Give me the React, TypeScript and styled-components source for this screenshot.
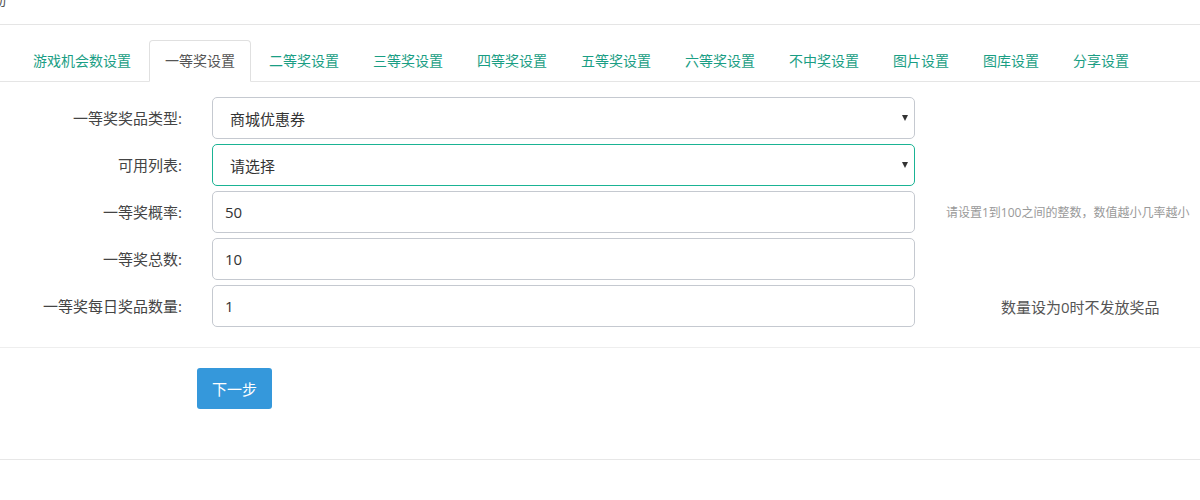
import React from 'react';
import styled, { createGlobalStyle } from 'styled-components';

const GlobalStyle = createGlobalStyle`
  html, body {
    margin: 0;
    padding: 0;
    background: #ffffff;
    font-family: 'Open Sans', 'Noto Sans CJK SC', sans-serif;
    font-size: 14px;
    color: #333;
    overflow: hidden;
  }
  * {
    box-sizing: border-box;
  }
`;

const Page = styled.div`
  width: 1200px;
  height: 500px;
  background: #ffffff;
`;

const Header = styled.div`
  height: 25px;
  border-bottom: 1px solid #e5e5e5;
  overflow: hidden;
`;

const HeaderTitle = styled.div`
  margin: -10px 0 0 -8px;
  font-size: 14px;
  color: #555;
  line-height: 20px;
`;

const TabBar = styled.ul`
  list-style: none;
  margin: 15px 0 0 0;
  padding: 0 0 0 17px;
  display: flex;
  border-bottom: 1px solid #e5e5e5;
`;

const Tab = styled.li<{ active?: boolean }>`
  margin-right: 2px;
  margin-bottom: -1px;
  padding: 10px 15px;
  line-height: 20px;
  font-size: 14px;
  border: 1px solid ${p => (p.active ? '#e0e0e0' : 'transparent')};
  border-bottom-color: ${p => (p.active ? '#ffffff' : 'transparent')};
  border-radius: 4px 4px 0 0;
  background: ${p => (p.active ? '#ffffff' : 'transparent')};
  color: ${p => (p.active ? '#555' : '#1a9e84')};
  white-space: nowrap;
  cursor: pointer;
`;

const Form = styled.div`
  padding: 15px 0 20px 0;
  display: flex;
  flex-direction: column;
  gap: 5px;
  border-bottom: 1px solid #eeeeee;
`;

const FormRow = styled.div`
  display: flex;
  align-items: center;
  height: 42px;
`;

const Label = styled.label`
  width: 197px;
  padding-right: 15px;
  text-align: right;
  font-size: 15px;
  color: #444;
  margin-top: -2px;
`;

const Field = styled.div<{ focused?: boolean }>`
  margin-left: 15px;
  width: 703px;
  height: 42px;
  border: 1px solid ${p => (p.focused ? '#1ab394' : '#c5c9d0')};
  border-radius: 5px;
  display: flex;
  align-items: center;
  justify-content: space-between;
  background: #fff;
`;

const FieldText = styled.span<{ select?: boolean }>`
  padding-left: ${p => (p.select ? '17px' : '12px')};
  font-size: 15px;
  color: #333;
`;

const Caret = styled.span`
  width: 0;
  height: 0;
  margin-right: 6px;
  border-left: 3px solid transparent;
  border-right: 3px solid transparent;
  border-top: 6px solid #333;
`;

const HelpSmall = styled.span`
  margin-left: 31px;
  font-size: 12px;
  color: #999;
  white-space: nowrap;
`;

const HelpNormal = styled.span`
  margin-left: 86px;
  font-size: 15px;
  color: #555;
  white-space: nowrap;
`;

const Actions = styled.div`
  height: 112px;
  padding: 20px 0 0 197px;
  border-bottom: 1px solid #e7e7e7;
`;

const Button = styled.button`
  width: 75px;
  height: 41px;
  border: none;
  border-radius: 3px;
  background: #3598db;
  color: #fff;
  font-family: 'Open Sans', 'Noto Sans CJK SC', sans-serif;
  font-size: 15px;
  cursor: pointer;
`;

const tabs = [
  '游戏机会数设置',
  '一等奖设置',
  '二等奖设置',
  '三等奖设置',
  '四等奖设置',
  '五等奖设置',
  '六等奖设置',
  '不中奖设置',
  '图片设置',
  '图库设置',
  '分享设置',
];

export default function App() {
  return (
    <Page>
      <GlobalStyle />
      <Header>
        <HeaderTitle>动</HeaderTitle>
      </Header>
      <TabBar>
        {tabs.map((t, i) => (
          <Tab key={t} active={i === 1}>
            {t}
          </Tab>
        ))}
      </TabBar>
      <Form>
        <FormRow>
          <Label>一等奖奖品类型:</Label>
          <Field>
            <FieldText select>商城优惠券</FieldText>
            <Caret />
          </Field>
        </FormRow>
        <FormRow>
          <Label>可用列表:</Label>
          <Field focused>
            <FieldText select>请选择</FieldText>
            <Caret />
          </Field>
        </FormRow>
        <FormRow>
          <Label>一等奖概率:</Label>
          <Field>
            <FieldText>50</FieldText>
          </Field>
          <HelpSmall>请设置1到100之间的整数，数值越小几率越小</HelpSmall>
        </FormRow>
        <FormRow>
          <Label>一等奖总数:</Label>
          <Field>
            <FieldText>10</FieldText>
          </Field>
        </FormRow>
        <FormRow>
          <Label>一等奖每日奖品数量:</Label>
          <Field>
            <FieldText>1</FieldText>
          </Field>
          <HelpNormal>数量设为0时不发放奖品</HelpNormal>
        </FormRow>
      </Form>
      <Actions>
        <Button>下一步</Button>
      </Actions>
    </Page>
  );
}
